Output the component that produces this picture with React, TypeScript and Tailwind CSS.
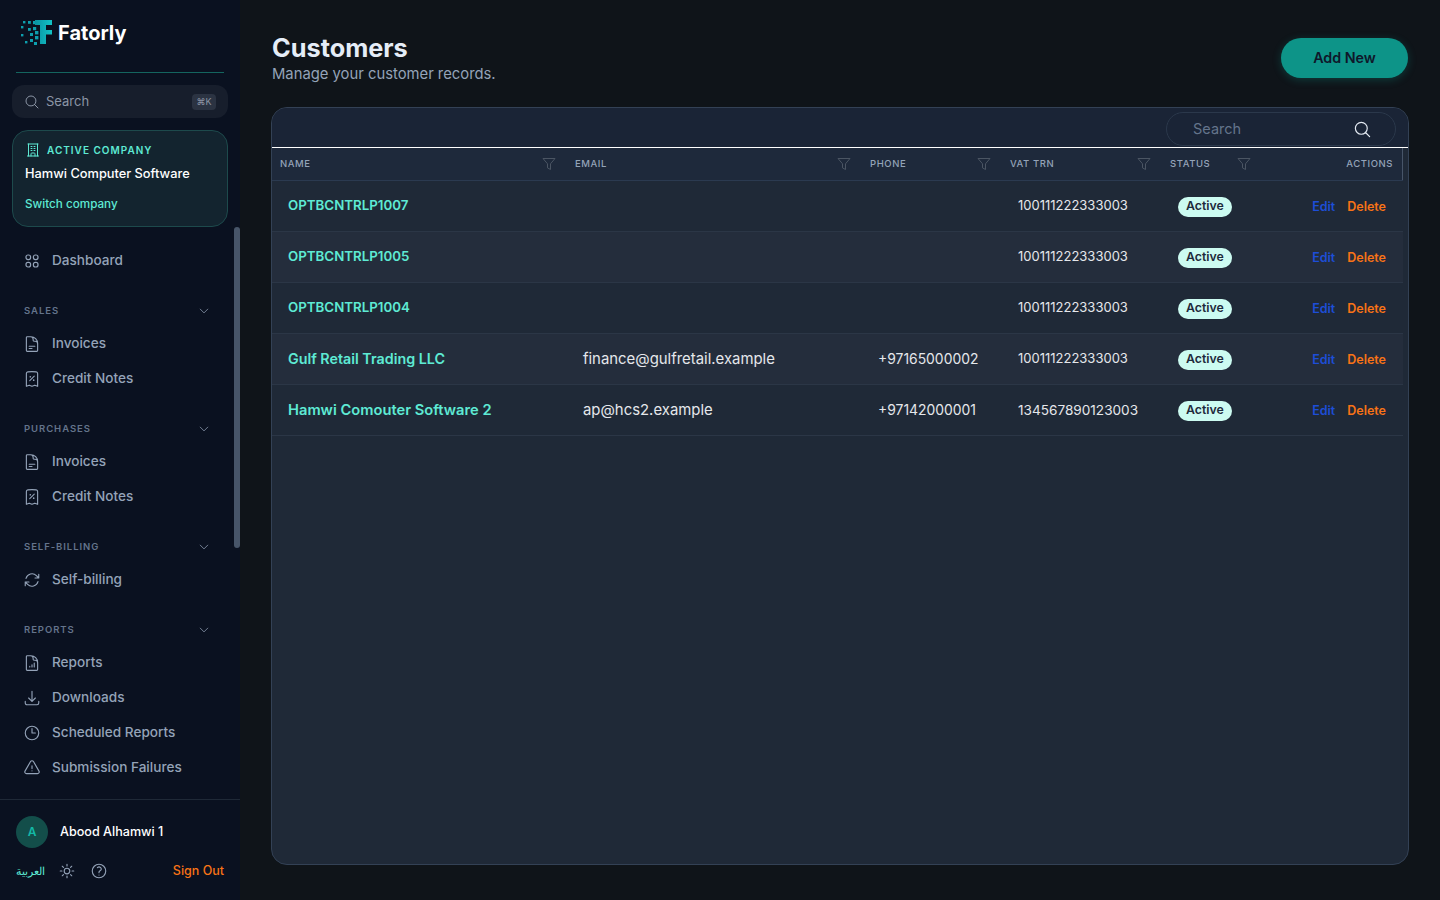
import type { ReactNode } from 'react';
import {
  HiOutlineArrowDownTray,
  HiOutlineArrowPath,
  HiOutlineBuildingOffice,
  HiOutlineChevronDown,
  HiOutlineClock,
  HiOutlineDocumentChartBar,
  HiOutlineDocumentText,
  HiOutlineExclamationTriangle,
  HiOutlineMagnifyingGlass,
  HiOutlineQuestionMarkCircle,
  HiOutlineReceiptPercent,
  HiOutlineSun,
} from 'react-icons/hi2';

const customers = [
  { name: 'OPTBCNTRLP1007', nameSize: 'text-[13.3px]', email: '', phone: '', vat: '100111222333003', vatSize: 'text-[13px]' },
  { name: 'OPTBCNTRLP1005', nameSize: 'text-[13.3px]', email: '', phone: '', vat: '100111222333003', vatSize: 'text-[13px]' },
  { name: 'OPTBCNTRLP1004', nameSize: 'text-[13.3px]', email: '', phone: '', vat: '100111222333003', vatSize: 'text-[13px]' },
  { name: 'Gulf Retail Trading LLC', nameSize: 'text-[14.3px]', email: 'finance@gulfretail.example', phone: '+97165000002', vat: '100111222333003', vatSize: 'text-[13px]' },
  { name: 'Hamwi Comouter Software 2', nameSize: 'text-[14.7px]', email: 'ap@hcs2.example', phone: '+97142000001', vat: '134567890123003', vatSize: 'text-[13.6px]' },
];

const columns = 'grid grid-cols-[295px_295px_140px_160px_100px_141px]';

function GridIcon() {
  return (
    <svg viewBox="0 0 16 16" className="h-4 w-4" fill="none" stroke="currentColor" strokeWidth="1.2">
      <rect x="2" y="2" width="4.6" height="4.6" rx="2" />
      <rect x="9.4" y="2" width="4.6" height="4.6" rx="2" />
      <rect x="2" y="9.4" width="4.6" height="4.6" rx="2" />
      <rect x="9.4" y="9.4" width="4.6" height="4.6" rx="2" />
    </svg>
  );
}

function FilterIcon() {
  return (
    <svg viewBox="0 0 14 14" className="h-[14px] w-[14px] text-[#4b5563]" fill="none" stroke="currentColor" strokeWidth="1">
      <path d="M1 1.5h12L8.5 6.8v5.7l-3-1.6V6.8z" strokeLinejoin="round" />
    </svg>
  );
}

function Logo() {
  const dots = [
    [1, 7, 2.4], [1, 15, 2.4], [5, 22, 2.4], [3, 2, 2.4], [8, 2, 2.8], [13, 2, 3.2], [8, 9, 2.8], [13, 8, 3.2],
    [10, 14, 3], [15, 12, 3.4], [15, 17, 3.4], [10, 20, 3], [14, 23, 3],
  ];
  return (
    <svg viewBox="0 0 32 26" className="h-[26px] w-8">
      <defs>
        <linearGradient id="logoFill" x1="0" y1="0" x2="1" y2="0">
          <stop offset="0" stopColor="#0a93a3" />
          <stop offset="1" stopColor="#12c6c8" />
        </linearGradient>
      </defs>
      {dots.map(([x, y, size]) => (
        <rect key={`${x}-${y}`} x={x} y={y} width={size} height={size} fill="#0d9fae" />
      ))}
      <path d="M15 1h17v5H26v5h7v4.5h-7V25h-6V6h-5z" fill="url(#logoFill)" />
    </svg>
  );
}

function NavItem({ icon, label }: { icon: ReactNode; label: string }) {
  return (
    <div className="flex h-[35px] items-center gap-[11px] pl-[23px] text-[13.6px] font-medium text-[#94a3b8]">
      <span className="flex w-[18px] justify-center text-[#94a3b8]">{icon}</span>
      {label}
    </div>
  );
}

function NavGroup({ title, children }: { title: string; children: ReactNode }) {
  return (
    <section className="mt-[19px]">
      <div className="flex h-[29px] items-center justify-between pr-[30px] pl-6 text-[9.5px] font-semibold tracking-[0.1em] text-[#64748b]">
        {title}
        <HiOutlineChevronDown className="-mt-[2px] h-3 w-3 text-[#94a3b8]" />
      </div>
      {children}
    </section>
  );
}

function Sidebar() {
  const icon = 'h-[18px] w-[18px]';
  return (
    <aside className="relative flex h-[900px] w-60 shrink-0 flex-col bg-[#0a1120]">
      <div className="absolute top-[227px] right-0 h-[321px] w-[6px] rounded-full bg-[#475569]" />
      <div className="flex h-[72px] items-start gap-[6px] px-5 pt-[19px]">
        <Logo />
        <span className="text-[20px] leading-[29px] font-bold text-white">Fatorly</span>
      </div>
      <div className="mx-4 h-px bg-[#14655f]" />
      <div className="mx-3 mt-3 flex h-[33px] items-center rounded-xl bg-[#171e2c] pr-3 pl-3 text-[13px] text-[#8b95a5]">
        <HiOutlineMagnifyingGlass className="h-4 w-4" />
        <span className="ml-[6px] flex-1">Search</span>
        <kbd className="flex h-4 w-6 items-center justify-center rounded bg-[#2b3342] font-['Inter',sans-serif] text-[9px] text-[#8b95a5]">⌘K</kbd>
      </div>
      <div className="mx-3 mt-3 h-[97px] rounded-2xl border border-[#1d4a4c] bg-[#13242f] px-3 pt-[11px]">
        <div className="flex h-[16px] items-center gap-[6px] text-[10px] font-semibold tracking-[0.1em] text-[#5eead4]">
          <HiOutlineBuildingOffice className="h-4 w-4" />
          ACTIVE COMPANY
        </div>
        <div className="mt-[6px] text-[12.8px] leading-[20px] font-medium text-white">Hamwi Computer Software</div>
        <div className="mt-[11px] text-[11.7px] leading-[18px] font-medium text-[#5eead4]">Switch company</div>
      </div>
      <div className="mt-4 flex-1">
        <NavItem icon={<GridIcon />} label="Dashboard" />
        <NavGroup title="SALES">
          <NavItem icon={<HiOutlineDocumentText className={icon} />} label="Invoices" />
          <NavItem icon={<HiOutlineReceiptPercent className={icon} />} label="Credit Notes" />
        </NavGroup>
        <NavGroup title="PURCHASES">
          <NavItem icon={<HiOutlineDocumentText className={icon} />} label="Invoices" />
          <NavItem icon={<HiOutlineReceiptPercent className={icon} />} label="Credit Notes" />
        </NavGroup>
        <NavGroup title="SELF-BILLING">
          <NavItem icon={<HiOutlineArrowPath className={icon} />} label="Self-billing" />
        </NavGroup>
        <NavGroup title="REPORTS">
          <NavItem icon={<HiOutlineDocumentChartBar className={icon} />} label="Reports" />
          <NavItem icon={<HiOutlineArrowDownTray className={icon} />} label="Downloads" />
          <NavItem icon={<HiOutlineClock className={icon} />} label="Scheduled Reports" />
          <NavItem icon={<HiOutlineExclamationTriangle className={icon} />} label="Submission Failures" />
        </NavGroup>
      </div>
      <div className="h-[101px] border-t border-[#1f2937] px-4 pt-4">
        <div className="flex items-center gap-3">
          <div className="flex h-8 w-8 items-center justify-center rounded-full bg-[#134e4a] text-xs font-semibold text-[#14b8a6]">A</div>
          <span className="text-[12.6px] font-medium text-white">Abood Alhamwi 1</span>
        </div>
        <div className="mt-[13px] flex h-[20px] items-center text-[12.5px]">
          <span className="font-['Noto_Sans',sans-serif] text-[11px] text-[#5eead4]">العربية</span>
          <HiOutlineSun className="ml-[13px] h-[18px] w-[18px] text-[#94a3b8]" />
          <HiOutlineQuestionMarkCircle className="ml-[14px] h-[18px] w-[18px] text-[#94a3b8]" />
          <span className="ml-auto font-medium text-[#f97316]">Sign Out</span>
        </div>
      </div>
    </aside>
  );
}

function HeaderCell({ label }: { label: string }) {
  return (
    <div className="flex items-center justify-between pr-[11px] pl-2 text-[9.5px] font-medium tracking-[0.06em] text-[#94a3b8]">
      {label}
      <FilterIcon />
    </div>
  );
}

function CustomerTable() {
  return (
    <div className="mt-[23px] h-[758px] overflow-hidden rounded-2xl border border-[#334155] bg-[#1f2937]">
      <div className="flex h-[39px] items-start justify-end bg-[#1a2436] pt-1 pr-[12px]">
        <div className="flex h-[34px] w-[230px] items-center justify-between rounded-full border border-[#2b384b] pr-[23px] pl-[26px] text-[14.5px] text-[#64748b]">
          Search
          <HiOutlineMagnifyingGlass className="h-[19px] w-[19px] text-[#e2e8f0]" />
        </div>
      </div>
      <div className="h-px bg-white" />
      <div className={`${columns} h-[33px] w-[1131px] border-b border-[#2b3a50] bg-[#1e293b]`}>
        <HeaderCell label="NAME" />
        <HeaderCell label="EMAIL" />
        <HeaderCell label="PHONE" />
        <HeaderCell label="VAT TRN" />
        <HeaderCell label="STATUS" />
        <div className="flex items-center justify-end border-r border-[#475569] pr-[9px] text-[9.5px] font-medium tracking-[0.06em] text-[#94a3b8]">ACTIONS</div>
      </div>
      <div className="w-[1131px]">
        {customers.map((customer, i) => (
          <div
            key={customer.name}
            className={`${columns} h-[51px] items-center border-b border-[#2b3646] text-[#e5e7eb] ${i % 2 === 1 ? 'bg-[#242d3c]' : ''}`}
          >
            <div className={`pl-4 font-semibold text-[#5eead4] ${customer.nameSize}`}>{customer.name}</div>
            <div className="pl-4 text-[14.9px]">{customer.email}</div>
            <div className="pl-4 text-[13.9px]">{customer.phone}</div>
            <div className={`pl-4 ${customer.vatSize}`}>{customer.vat}</div>
            <div className="flex pt-px pl-4">
              <span className="flex h-[20px] items-center rounded-full bg-[#ccfbf1] px-2 text-[12.3px] font-semibold text-[#1e293b]">Active</span>
            </div>
            <div className="flex justify-end gap-3 pt-[3px] pr-[17px] text-[12.5px] font-semibold">
              <span className="text-[#1d4ed8]">Edit</span>
              <span className="text-[#f97316]">Delete</span>
            </div>
          </div>
        ))}
      </div>
    </div>
  );
}

export default function App() {
  return (
    <div className="flex h-[900px] w-[1440px] overflow-hidden bg-[#0f1419] font-['Inter',sans-serif]">
      <Sidebar />
      <main className="flex-1 px-[31px] pt-[30px]">
        <div className="flex items-start justify-between">
          <div className="pl-px">
            <h1 className="text-[25.3px] leading-9 font-bold text-[#e5edf7]">Customers</h1>
            <p className="-mt-[2px] text-[14.8px] leading-[20px] text-[#94a3b8]">Manage your customer records.</p>
          </div>
          <button className="mt-2 mr-px h-10 w-[127px] rounded-full bg-[#0d9488] text-[14.3px] font-semibold text-[#0f172a] shadow-[0_2px_8px_rgba(13,148,136,0.3)]">Add New</button>
        </div>
        <CustomerTable />
      </main>
    </div>
  );
}
